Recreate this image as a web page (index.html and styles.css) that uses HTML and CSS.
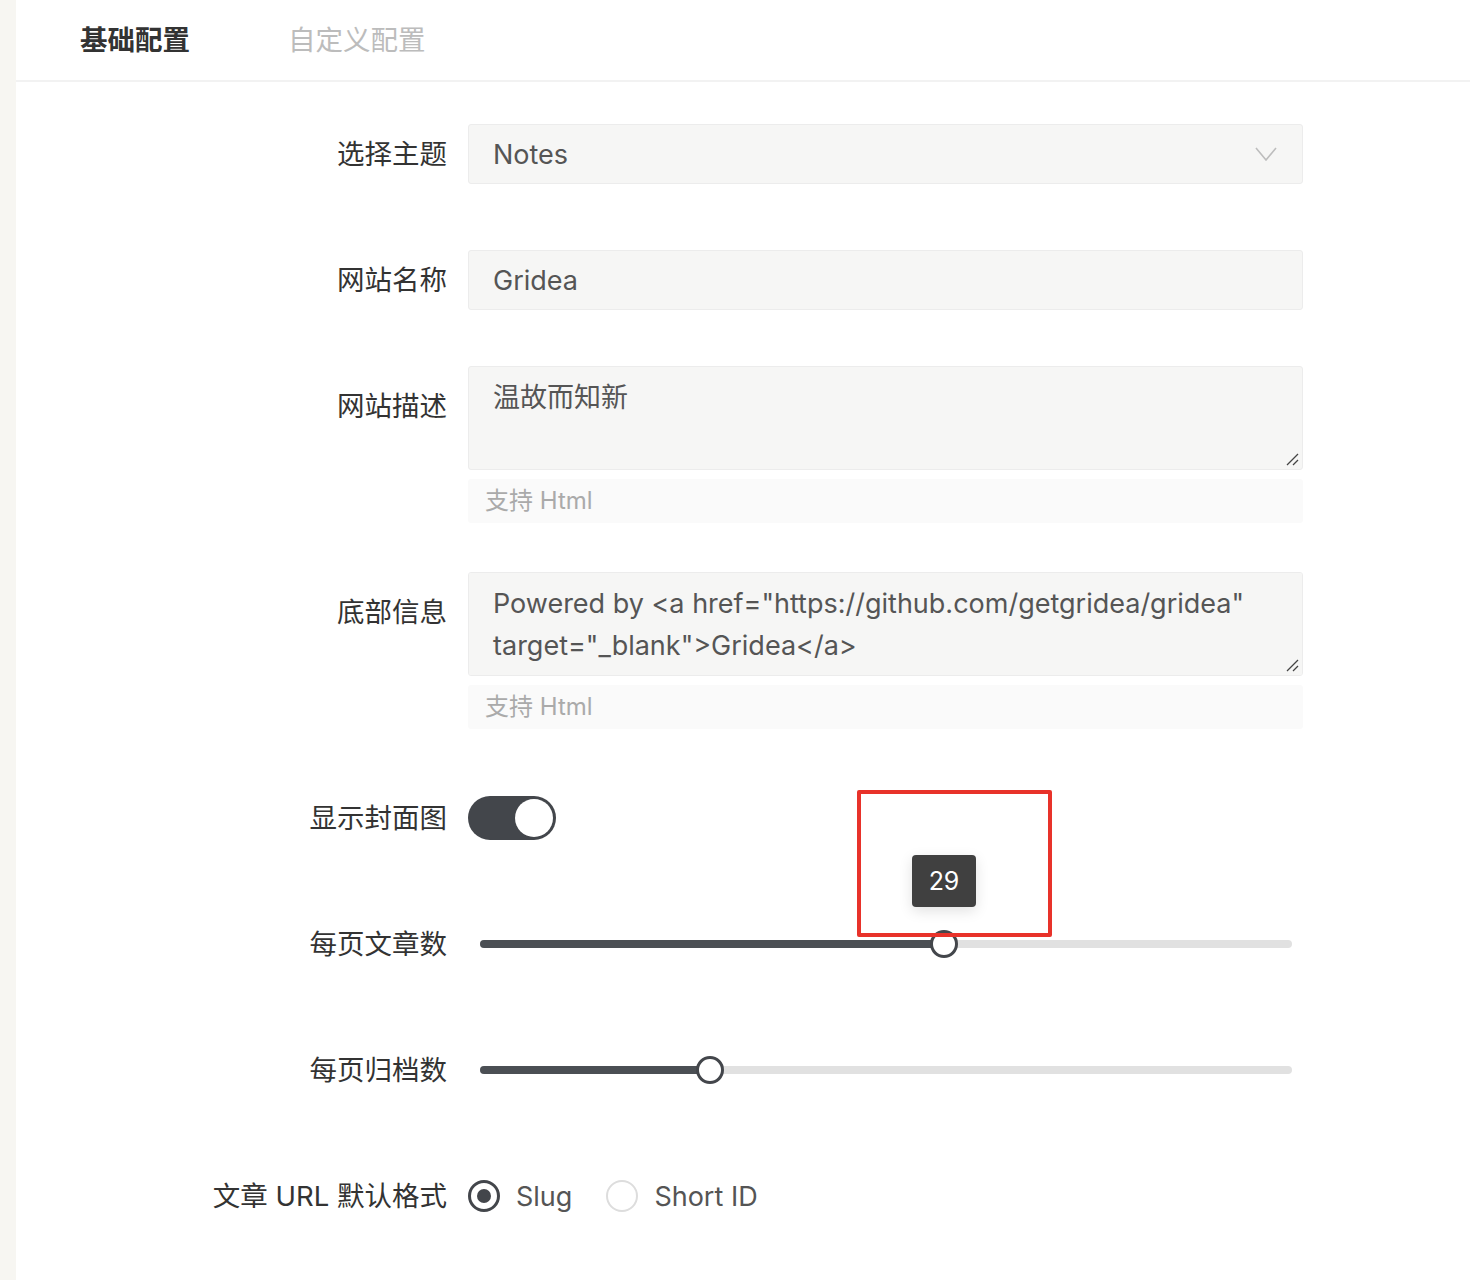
FILE: index.html
```html
<!DOCTYPE html>
<html lang="zh-CN">
<head>
  <meta charset="UTF-8" />
  <meta name="viewport" content="width=device-width, initial-scale=1.0" />
  <title>主题设置</title>
  <link rel="stylesheet" href="styles.css">
</head>
<body>
  <div class="side-strip"></div>

  <div class="main-panel">
    <div class="tab-bar">
      <div class="tab-item active">基础配置</div>
      <div class="tab-item">自定义配置</div>
    </div>

    <form class="config-form">
      <div class="form-row gap-lg">
        <label class="form-label">选择主题</label>
        <div class="select-box">
          <span>Notes</span>
          <svg class="select-arrow" width="22" height="14" viewBox="0 0 22 14">
            <polyline points="1,1 11,13 21,1" fill="none" stroke="#bdbdbd" stroke-width="1.6" />
          </svg>
        </div>
      </div>

      <div class="form-row gap-md">
        <label class="form-label">网站名称</label>
        <input type="text" class="text-input" value="Gridea" />
      </div>

      <div class="form-row gap-sm">
        <label class="form-label top">网站描述</label>
        <div class="field-stack">
          <div class="area-wrap">
            <textarea class="text-area">温故而知新</textarea>
            <svg class="grip" width="14" height="14" viewBox="0 0 14 14">
              <line x1="2" y1="13" x2="13" y2="2" stroke="#444" stroke-width="1.3" />
              <line x1="8" y1="13" x2="13" y2="8" stroke="#444" stroke-width="1.3" />
            </svg>
          </div>
          <div class="help-text">支持 Html</div>
        </div>
      </div>

      <div class="form-row gap-xl">
        <label class="form-label top">底部信息</label>
        <div class="field-stack">
          <div class="area-wrap">
            <textarea class="text-area">Powered by &lt;a href="https://github.com/getgridea/gridea" target="_blank"&gt;Gridea&lt;/a&gt;</textarea>
            <svg class="grip" width="14" height="14" viewBox="0 0 14 14">
              <line x1="2" y1="13" x2="13" y2="2" stroke="#444" stroke-width="1.3" />
              <line x1="8" y1="13" x2="13" y2="8" stroke="#444" stroke-width="1.3" />
            </svg>
          </div>
          <div class="help-text">支持 Html</div>
        </div>
      </div>

      <div class="form-row gap-lg ctl-row">
        <label class="form-label">显示封面图</label>
        <div class="control-cell">
          <div class="switch on"><span class="switch-knob"></span></div>
        </div>
      </div>

      <div class="form-row gap-lg ctl-row">
        <label class="form-label">每页文章数</label>
        <div class="control-cell slider-cell">
          <div class="slider-track">
            <div class="slider-fill" style="width: 57.1%"></div>
            <div class="slider-thumb" style="left: 57.1%"></div>
          </div>
          <div class="slider-tip">29</div>
          <div class="mark-box"></div>
        </div>
      </div>

      <div class="form-row gap-lg ctl-row">
        <label class="form-label">每页归档数</label>
        <div class="control-cell slider-cell">
          <div class="slider-track">
            <div class="slider-fill" style="width: 28.3%"></div>
            <div class="slider-thumb" style="left: 28.3%"></div>
          </div>
        </div>
      </div>

      <div class="form-row ctl-row">
        <label class="form-label">文章 URL 默认格式</label>
        <div class="control-cell radio-group">
          <span class="radio-item"><span class="radio-dot checked"></span>Slug</span>
          <span class="radio-item"><span class="radio-dot"></span>Short ID</span>
        </div>
      </div>
    </form>
  </div>
</body>
</html>
```

FILE: styles.css
```css
* {
  box-sizing: border-box;
  font-family: Inter, "Noto Sans CJK SC", sans-serif;
}

body {
  margin: 0;
  display: flex;
  min-height: 100vh;
  background: #fff;
}

.side-strip {
  width: 16px;
  flex-shrink: 0;
  background: #f7f6f2;
}

.main-panel {
  flex: 1;
}

.tab-bar {
  display: flex;
  height: 82px;
  padding-left: 64px;
  border-bottom: 2px solid #f2f2f2;
}

.tab-item {
  line-height: 80px;
  font-size: 27.5px;
  color: #bcbcbc;
  margin-right: 98px;
}

.tab-item.active {
  color: #333;
  font-weight: bold;
}

.config-form {
  padding-top: 42px;
}

.form-row {
  display: grid;
  grid-template-columns: 431px 835px;
  column-gap: 21px;
}

.gap-xl { margin-bottom: 59px; }
.gap-lg { margin-bottom: 66px; }
.gap-md { margin-bottom: 56px; }
.gap-sm { margin-bottom: 49px; }

.form-label {
  text-align: right;
  font-size: 27.5px;
  line-height: 60px;
  color: #333;
  white-space: nowrap;
}

.form-label.top {
  padding-top: 10px;
}

.select-box,
.text-input {
  height: 60px;
  background: #f6f6f5;
  border: 1px solid #ececec;
  border-radius: 3px;
  padding: 0 24px;
  font-size: 27px;
  color: #555;
  display: flex;
  align-items: center;
  justify-content: space-between;
  outline: none;
}

.select-arrow {
  margin-right: 1px;
}

.field-stack {
  display: flex;
  flex-direction: column;
  gap: 9px;
}

.area-wrap {
  position: relative;
  display: flex;
}

.text-area {
  width: 100%;
  height: 104px;
  background: #f6f6f5;
  border: 1px solid #ececec;
  border-radius: 3px;
  padding: 10px 24px;
  font-size: 27px;
  line-height: 42px;
  color: #555;
  resize: none;
  outline: none;
}

.grip {
  position: absolute;
  right: 4px;
  bottom: 4px;
}

.help-text {
  height: 44px;
  line-height: 44px;
  background: #fafafa;
  border-radius: 3px;
  padding: 0 17px;
  font-size: 24px;
  color: #aaa;
}

.control-cell {
  height: 60px;
  display: flex;
  align-items: center;
}

.switch {
  width: 88px;
  height: 44px;
  border-radius: 22px;
  background: #43464b;
  position: relative;
}

.switch-knob {
  position: absolute;
  top: 3px;
  right: 3px;
  width: 38px;
  height: 38px;
  border-radius: 50%;
  background: #fff;
}

.slider-cell {
  position: relative;
  padding: 0 11px 0 12px;
}

.slider-track {
  position: relative;
  width: 100%;
  height: 8px;
  border-radius: 4px;
  background: #e1e1e1;
}

.slider-fill {
  height: 100%;
  border-radius: 4px;
  background: #4b4f54;
}

.slider-thumb {
  position: absolute;
  top: 50%;
  width: 28px;
  height: 28px;
  margin: -14px 0 0 -14px;
  border-radius: 50%;
  background: #fff;
  border: 3px solid #43464b;
}

.slider-tip {
  position: absolute;
  left: 444px;
  top: -59px;
  width: 64px;
  height: 52px;
  line-height: 52px;
  text-align: center;
  background: #404040;
  color: #fff;
  font-size: 25px;
  border-radius: 4px;
  box-shadow: 0 4px 14px rgba(0, 0, 0, 0.12);
}

.mark-box {
  position: absolute;
  left: 389px;
  top: -124px;
  width: 195px;
  height: 147px;
  border: 4px solid #e8322a;
  border-radius: 2px;
}

.radio-group {
  gap: 34px;
}

.radio-item {
  display: flex;
  align-items: center;
  gap: 16px;
  font-size: 27px;
  color: #555;
}

.radio-dot {
  width: 32px;
  height: 32px;
  border-radius: 50%;
  border: 2px solid #ddd;
  display: flex;
  align-items: center;
  justify-content: center;
}

.radio-dot.checked {
  border: 3px solid #43464b;
}

.radio-dot.checked::after {
  content: "";
  width: 14px;
  height: 14px;
  border-radius: 50%;
  background: #43464b;
}
```
